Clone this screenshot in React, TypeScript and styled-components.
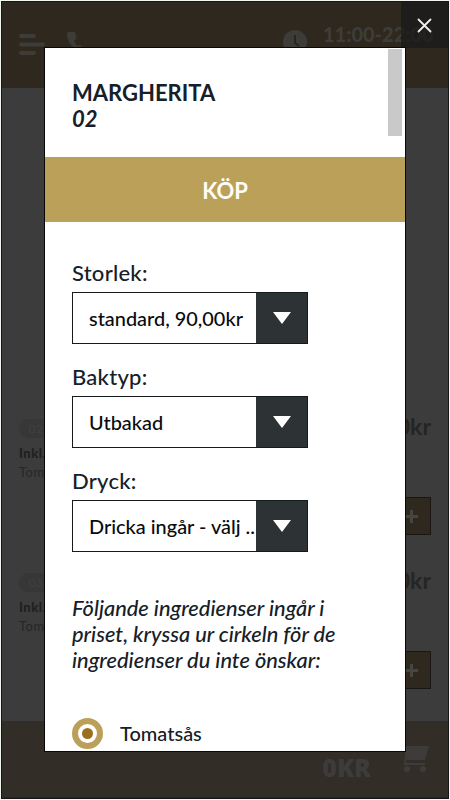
import React from "react";
import styled, { createGlobalStyle } from "styled-components";

const Global = createGlobalStyle`
  * { box-sizing: border-box; }
  body { margin: 0; background: #f3f5ef; font-family: Lato, "Open Sans", sans-serif; color: #152028; }
  h1, p { margin: 0; }
`;

const Screen = styled.div`
  position: relative;
  width: 448px;
  height: 798px;
  margin: 1px;
  border: 1px solid #151615;
  background: #3c3c3c;
  display: flex;
  flex-direction: column;
  overflow: hidden;
`;

const Header = styled.header`
  height: 86px;
  flex: none;
  background: #2e281e;
  color: #3d3c39;
  display: flex;
  align-items: flex-start;
  padding: 0 17px;
`;

const MenuIcon = styled.svg`
  width: 26px;
  height: 24px;
  margin-top: 31px;
`;

const PhoneIcon = styled.svg`
  width: 19px;
  height: 19px;
  margin: 29px 0 0 22px;
`;

const ClockIcon = styled.svg`
  width: 24px;
  height: 24px;
  margin: 28px 16px 0 auto;
`;

const Hours = styled.span`
  font-size: 20px;
  font-weight: 900;
  line-height: 24px;
  margin-top: 20px;
  width: 108px;
  white-space: nowrap;
`;

const Products = styled.main`
  flex: 1;
  padding: 324px 17px 0;
`;

const Product = styled.article`
  height: 154px;
  display: flex;
  justify-content: space-between;
`;

const Info = styled.div`
  font-size: 13px;
  line-height: 19px;
  letter-spacing: 0.5px;
  color: #262626;
  padding-top: 7px;
`;

const NumberTag = styled.div`
  width: 34px;
  height: 19px;
  border-radius: 10px;
  background: #373737;
  color: #404040;
  text-align: center;
  font-size: 12px;
  margin-bottom: 6px;
`;

const Included = styled.div`
  font-weight: 900;
  color: #202020;
`;

const Purchase = styled.div`
  display: flex;
  flex-direction: column;
  align-items: flex-end;
`;

const Price = styled.div`
  color: #252525;
  font-size: 23px;
  font-weight: 700;
  line-height: 28px;
  height: 85px;
`;

const Add = styled.div`
  width: 39px;
  height: 38px;
  border: 1px solid #171612;
  background: #2e281e;
  color: #464541;
  display: flex;
  align-items: center;
  justify-content: center;
`;

const Footer = styled.footer`
  flex: none;
  height: 77px;
  background: #322d27;
  border-bottom: 1px solid #292520;
  display: flex;
  align-items: flex-start;
  justify-content: flex-end;
  padding: 25px 19px 0;
  gap: 30px;
  color: #3d3c3b;
`;

const Total = styled.strong`
  font-family: "Open Sans", sans-serif;
  font-size: 25px;
  font-weight: 800;
  line-height: 32px;
  padding-top: 5px;
`;

const CartIcon = styled.svg`
  width: 28px;
  height: 28px;
`;

const Close = styled.button`
  position: absolute;
  top: 0;
  right: 0;
  width: 47px;
  height: 46px;
  border: 0;
  padding: 0;
  background: rgba(27, 27, 27, 0.78);
  display: flex;
  align-items: center;
  justify-content: center;
`;

const Dialog = styled.section`
  position: absolute;
  left: 42px;
  top: 45px;
  width: 362px;
  height: 705px;
  border: 1px solid #080808;
  background: #fff;
  overflow: hidden;
`;

const ScrollThumb = styled.div`
  position: absolute;
  right: 3px;
  top: 1px;
  width: 14px;
  height: 87px;
  background: #c9c9c9;
`;

const Heading = styled.div`
  height: 109px;
  padding: 32px 27px 0;
`;

const Title = styled.h1`
  font-size: 22px;
  font-weight: 700;
  line-height: 26px;
`;

const Code = styled.div`
  font-size: 22px;
  font-style: italic;
  font-weight: 700;
  line-height: 26px;
`;

const Buy = styled.button`
  display: block;
  width: 100%;
  height: 65px;
  border: 0;
  background: #bba059;
  color: #fffdf6;
  font: 700 22px/26px Lato, sans-serif;
  padding: 2px 0 0;
`;

const Form = styled.div`
  padding: 36px 27px 0;
`;

const Field = styled.div`
  height: 104px;
`;

const Label = styled.div`
  font-size: 22px;
  font-weight: 500;
  line-height: 26px;
  height: 34px;
  padding-top: 2px;
  letter-spacing: 0.25px;
`;

const Select = styled.div`
  display: grid;
  grid-template-columns: 1fr 51px;
  width: 236px;
  height: 52px;
  border: 1px solid #151a1c;
`;

const Value = styled.div`
  padding: 2px 0 0 16px;
  font-size: 19.9px;
  font-weight: 500;
  line-height: 47px;
  white-space: nowrap;
  overflow: hidden;
  color: #080b0d;
`;

const Arrow = styled.div`
  background: #2d3235;
  display: flex;
  align-items: center;
  justify-content: center;
`;

const Note = styled.p`
  margin-top: 25px;
  font-size: 21.8px;
  font-style: italic;
  font-weight: 500;
  line-height: 26px;
  white-space: nowrap;
`;

const Ingredient = styled.div`
  display: flex;
  align-items: center;
  gap: 17px;
  margin-top: 44px;
  font-size: 20px;
  font-weight: 500;
  line-height: 32px;
`;

const Radio = styled.span`
  width: 31px;
  height: 31px;
  border-radius: 50%;
  border: 6.5px solid #bba059;
  display: flex;
  align-items: center;
  justify-content: center;

  &::after {
    content: "";
    width: 11px;
    height: 11px;
    border-radius: 50%;
    background: #9a701b;
  }
`;

const options = [
  { label: "Storlek:", value: "standard, 90,00kr" },
  { label: "Baktyp:", value: "Utbakad" },
  { label: "Dryck:", value: "Dricka ingår - välj .." },
];

export default function App() {
  return (
    <>
      <Global />
      <Screen>
        <Header>
          <MenuIcon viewBox="0 0 26 24" stroke="currentColor" strokeWidth="4" strokeLinecap="round">
            <path d="M2 3h13M2 11.5h22M2 20h13" />
          </MenuIcon>
          <PhoneIcon viewBox="0 0 19 19" fill="currentColor">
            <path d="M1 1h7l1.5 6-2.5 3 3 5 3-1 5 4-3 1C7 19 0 12 0 3Q0 2 1 1Z" />
          </PhoneIcon>
          <ClockIcon viewBox="0 0 24 24">
            <circle cx="12" cy="12" r="12" fill="currentColor" />
            <path d="M12 5v8l4 3" fill="none" stroke="#2a261e" strokeWidth="2" />
          </ClockIcon>
          <Hours>11:00-22:00</Hours>
        </Header>
        <Products>
          {["02", "03"].map((number) => (
            <Product key={number}>
              <Info>
                <NumberTag>{number}</NumberTag>
                <Included>Inkl.</Included>
                Tom
              </Info>
              <Purchase>
                <Price>90kr</Price>
                <Add>
                  <svg width="15" height="15" viewBox="0 0 15 15" stroke="currentColor" strokeWidth="3">
                    <path d="M7.5 1v13M1 7.5h13" />
                  </svg>
                </Add>
              </Purchase>
            </Product>
          ))}
        </Products>
        <Footer>
          <Total>0KR</Total>
          <CartIcon viewBox="0 0 28 28" fill="currentColor">
            <path d="M5 0h23l-4 14H6z" />
            <path d="M2 1h4L4 18h20" fill="none" stroke="currentColor" strokeWidth="2" />
            <circle cx="6" cy="23" r="3" />
            <circle cx="22" cy="23" r="3" />
          </CartIcon>
        </Footer>
        <Close aria-label="Stäng">
          <svg width="15" height="15" viewBox="0 0 15 15" stroke="#eeeeec" strokeWidth="1.8" strokeLinecap="round">
            <path d="m1.5 1.5 12 12M13.5 1.5l-12 12" />
          </svg>
        </Close>
        <Dialog role="dialog" aria-label="Margherita">
          <Heading>
            <Title>MARGHERITA</Title>
            <Code>02</Code>
          </Heading>
          <Buy>KÖP</Buy>
          <Form>
            {options.map(({ label, value }) => (
              <Field key={label}>
                <Label>{label}</Label>
                <Select>
                  <Value>{value}</Value>
                  <Arrow>
                    <svg width="18" height="12" viewBox="0 0 18 12" fill="#fff">
                      <path d="M0 0h18L9 12Z" />
                    </svg>
                  </Arrow>
                </Select>
              </Field>
            ))}
            <Note>
              Följande ingredienser ingår i<br />
              priset, kryssa ur cirkeln för de<br />
              ingredienser du inte önskar:
            </Note>
            <Ingredient>
              <Radio />
              Tomatsås
            </Ingredient>
          </Form>
          <ScrollThumb />
        </Dialog>
      </Screen>
    </>
  );
}
